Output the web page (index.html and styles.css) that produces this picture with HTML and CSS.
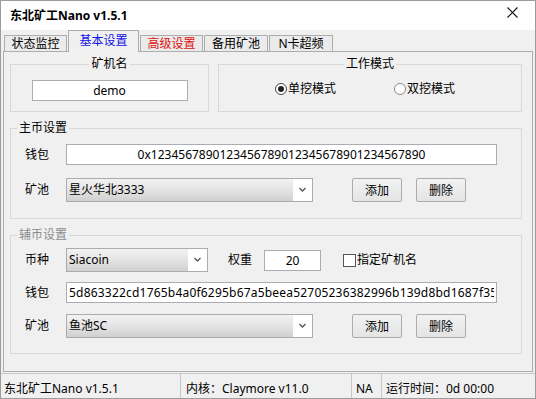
FILE: index.html
```html
<!DOCTYPE html>
<html lang="zh-CN">
<head>
  <meta charset="UTF-8">
  <meta name="viewport" content="width=device-width, initial-scale=1.0">

  <title>东北矿工Nano v1.5.1</title>

  <link rel="stylesheet" href="styles.css">
</head>
<body>

<div class="window">
  <div class="titlebar">
    <span class="title">东北矿工Nano v1.5.1</span>
    <svg class="close" width="11" height="11" viewBox="0 0 11 11">
      <path d="M0.5 0.5 L10.5 10.5 M10.5 0.5 L0.5 10.5" stroke="#111" stroke-width="1.1" fill="none"/>
    </svg>
  </div>

  <div class="tabs">
    <div class="tab">状态监控</div>
    <div class="tab active">基本设置</div>
    <div class="tab red">高级设置</div>
    <div class="tab wide">备用矿池</div>
    <div class="tab wide">N卡超频</div>
  </div>

  <div class="panel">
    <div class="top-row">
      <fieldset class="group name-group">
        <legend class="center">矿机名</legend>
        <input class="text name" type="text" value="demo">
      </fieldset>

      <fieldset class="group mode-group">
        <legend class="center">工作模式</legend>
        <div class="radios">
          <label class="radio"><span class="circle checked"></span>单挖模式</label>
          <label class="radio"><span class="circle"></span>双挖模式</label>
        </div>
      </fieldset>
    </div>

    <fieldset class="group coin-group">
      <legend>主币设置</legend>
      <div class="rows main-rows">
        <div class="field">
          <span class="lbl">钱包</span>
          <input class="text wallet centered" type="text" value="0x1234567890123456789012345678901234567890">
        </div>
        <div class="field gap-main">
          <span class="lbl">矿池</span>
          <div class="combo pool">
            <span class="combo-text">星火华北3333</span>
            <span class="combo-arrow">
              <svg width="9" height="6" viewBox="0 0 9 6"><path d="M1.5 1 L4.5 4 L7.5 1" fill="none" stroke="#555" stroke-width="1.3"/></svg>
            </span>
          </div>
          <button class="btn first">添加</button>
          <button class="btn">删除</button>
        </div>
      </div>
    </fieldset>

    <fieldset class="group coin-group second">
      <legend class="muted">辅币设置</legend>
      <div class="rows sub-rows">
        <div class="field">
          <span class="lbl">币种</span>
          <div class="combo coin">
            <span class="combo-text">Siacoin</span>
            <span class="combo-arrow">
              <svg width="9" height="6" viewBox="0 0 9 6"><path d="M1.5 1 L4.5 4 L7.5 1" fill="none" stroke="#555" stroke-width="1.3"/></svg>
            </span>
          </div>
          <span class="weight-lbl">权重</span>
          <input class="text weight" type="text" value="20">
          <label class="check"><span class="box"></span>指定矿机名</label>
        </div>
        <div class="field gap-wallet">
          <span class="lbl">钱包</span>
          <input class="text wallet hex" type="text" value="5d863322cd1765b4a0f6295b67a5beea52705236382996b139d8bd1687f35e2a1c4d">
        </div>
        <div class="field gap-pool">
          <span class="lbl">矿池</span>
          <div class="combo pool">
            <span class="combo-text">鱼池SC</span>
            <span class="combo-arrow">
              <svg width="9" height="6" viewBox="0 0 9 6"><path d="M1.5 1 L4.5 4 L7.5 1" fill="none" stroke="#555" stroke-width="1.3"/></svg>
            </span>
          </div>
          <button class="btn first">添加</button>
          <button class="btn">删除</button>
        </div>
      </div>
    </fieldset>
  </div>

  <div class="status">
    <div class="seg seg-name">东北矿工Nano v1.5.1</div>
    <div class="seg seg-core">内核：Claymore v11.0</div>
    <div class="seg seg-na">NA</div>
    <div class="seg seg-time">运行时间：0d 00:00</div>
  </div>
</div>

</body>
</html>
```

FILE: styles.css
```css
* {
  box-sizing: border-box;
}

body {
  margin: 0;
  font-family: "Noto Sans", "Noto Sans CJK SC", sans-serif;
  font-size: 12px;
  line-height: 16px;
  color: #000;
}

.window {
  width: 536px;
  height: 399px;
  border: 1px solid #9c9c9c;
  background-color: #f0f0f0;
  display: flex;
  flex-direction: column;
}

.titlebar {
  height: 29px;
  flex: none;
  background-color: #fff;
  display: flex;
  justify-content: space-between;
  padding: 0 17px 0 9px;
}

.title {
  font-weight: bold;
  line-height: 29px;
}

.close {
  margin-top: 6px;
}

/* tab strip */
.tabs {
  height: 21px;
  flex: none;
  display: flex;
  align-items: flex-end;
  gap: 1px;
  padding-left: 3px;
  position: relative;
  z-index: 1;
}

.tab {
  width: 63px;
  height: 16px;
  border: 1px solid #acacac;
  border-bottom: none;
  background-color: #ebebeb;
  text-align: center;
  line-height: 15px;
}

.tab.wide {
  width: 64px;
}

.tab.active {
  width: 71px;
  height: 22px;
  margin-bottom: -1px;
  background-color: #f0f0f0;
  color: #1414e6;
  line-height: 19px;
}

.tab.red {
  color: #e01010;
}

.panel {
  height: 321px;
  flex: none;
  margin: 0 2px;
  border: 1px solid #acacac;
  padding: 4px 0 0 6px;
}

/* group boxes */
.group {
  margin: 0;
  padding: 0;
  border: 1px solid #d9d9d9;
  min-width: 0;
}

.group legend {
  padding: 0 2px;
  margin-left: 6px;
  line-height: 16px;
}

.group legend.center {
  margin: 0 auto;
}

.group legend.muted {
  color: #8c8c8c;
}

.top-row {
  display: flex;
  gap: 9px;
}

.name-group {
  width: 199px;
  padding-bottom: 10px;
}

.mode-group {
  width: 304px;
}

.text {
  display: block;
  height: 21px;
  margin: 0;
  padding: 0 2px;
  border: 1px solid #abadb3;
  background-color: #fff;
  font-family: inherit;
  font-size: 12px;
  color: #000;
  outline: none;
}

.name {
  width: 156px;
  margin: 8px auto 0;
  text-align: center;
}

.radios {
  display: flex;
  gap: 58px;
  margin-top: 9px;
  padding-left: 56px;
}

.radio {
  display: flex;
  align-items: center;
  gap: 1px;
}

.circle {
  width: 12px;
  height: 12px;
  border: 1px solid #8a8a8a;
  border-radius: 50%;
  background-color: #fff;
  display: flex;
  align-items: center;
  justify-content: center;
}

.circle.checked {
  border-color: #444;
}

.circle.checked::after {
  content: "";
  width: 6px;
  height: 6px;
  border-radius: 50%;
  background-color: #222;
}

.coin-group {
  width: 512px;
  margin-top: 8px;
}

.rows {
  padding-left: 14px;
}

.main-rows {
  padding-top: 8px;
  padding-bottom: 16px;
}

.sub-rows {
  padding-top: 5px;
  padding-bottom: 15px;
}

.field {
  display: flex;
  align-items: center;
}

.gap-main {
  margin-top: 13px;
}

.gap-wallet {
  margin-top: 10px;
}

.gap-pool {
  margin-top: 11px;
}

.lbl {
  width: 41px;
  flex: none;
}

.wallet {
  width: 431px;
}

.hex {
  letter-spacing: 0.2px;
}

.centered {
  text-align: center;
}

/* combo boxes */
.combo {
  display: flex;
  height: 24px;
  border: 1px solid #acacac;
  background-color: #fff;
}

.combo.pool {
  width: 247px;
}

.combo.coin {
  width: 142px;
}

.combo-text {
  flex: 1;
  padding-left: 2px;
  line-height: 22px;
  background: linear-gradient(#f2f2f2, #e4e4e4 50%, #d0d0d0);
}

.combo-arrow {
  width: 19px;
  display: flex;
  align-items: center;
  justify-content: center;
}

.btn {
  width: 50px;
  height: 24px;
  margin-left: 14px;
  padding: 0;
  border: 1px solid #acacac;
  border-radius: 2px;
  background: linear-gradient(#f2f2f2, #e4e4e4);
  font-family: inherit;
  font-size: 12px;
  color: #000;
}

.btn.first {
  margin-left: 39px;
}

.weight-lbl {
  margin-left: 20px;
}

.weight {
  width: 57px;
  margin-left: 12px;
  text-align: center;
}

.check {
  display: flex;
  align-items: center;
  gap: 1px;
  margin-left: 22px;
}

.box {
  width: 13px;
  height: 13px;
  border: 1px solid #555;
  background-color: #fff;
}

/* status bar */
.status {
  flex: 1;
  display: flex;
  margin-top: 1px;
  border-top: 1px solid #c8c8c8;
}

.seg {
  padding-top: 7px;
  line-height: 16px;
}

.seg-name {
  width: 179px;
  padding-left: 3px;
}

.seg-core {
  width: 171px;
  padding-left: 5px;
  border-left: 1px solid #c8c8c8;
}

.seg-na {
  width: 30px;
  padding-left: 4px;
  border-left: 1px solid #c8c8c8;
}

.seg-time {
  flex: 1;
  padding-left: 4px;
  border-left: 1px solid #c8c8c8;
}
```
